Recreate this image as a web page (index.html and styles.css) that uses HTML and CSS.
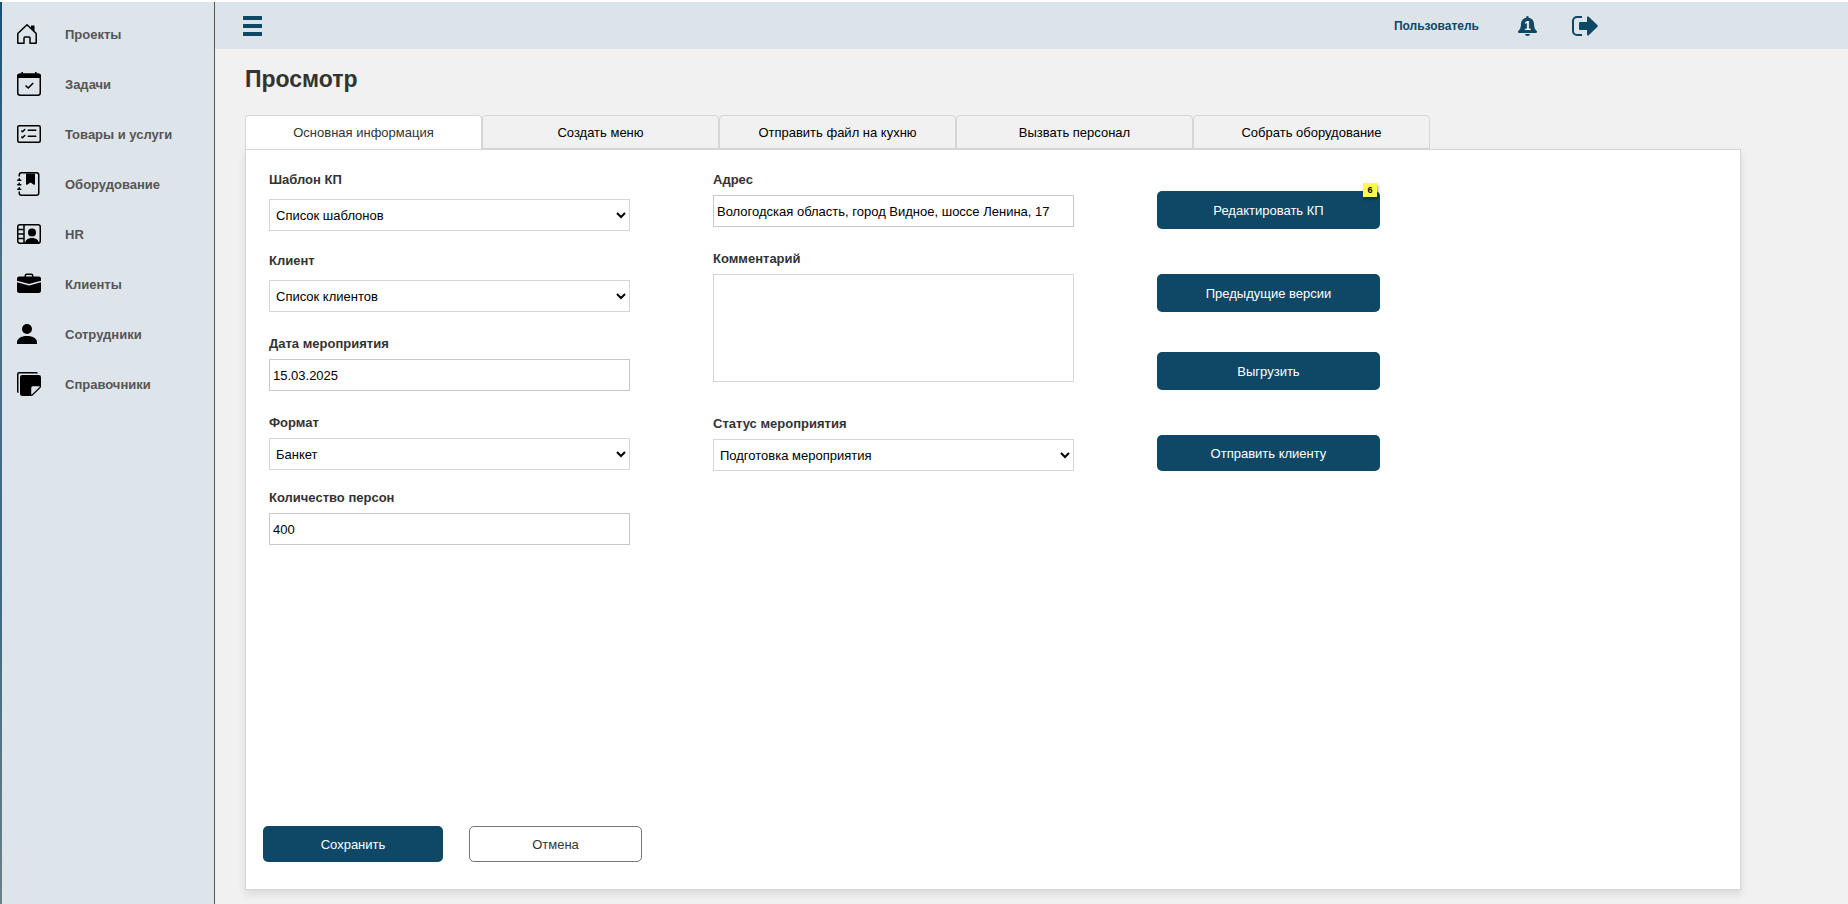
FILE: index.html
```html
<!DOCTYPE html>
<html lang="ru">
<head>
    <meta charset="UTF-8">
    <meta name="viewport" content="width=device-width, initial-scale=1.0">
    <title>Просмотр</title>
    <link rel="stylesheet" href="styles.css">
</head>
<body>
    <nav class="sidebar">
        <a class="menu-item" href="#">
            <span class="menu-icon"><svg width="20" height="20" viewBox="0 0 20 20" fill="none" stroke="#000" stroke-width="1.500"><path d="M.8 19.200V9.500L10 .8l9.200 8.700v9.700H13V14a1 1 0 0 0-1-1H8a1 1 0 0 0-1 1v5.200z" stroke-linejoin="round"/><path d="M14 1.500h3.500v6.500L14 4.500z" fill="#000" stroke="none"/></svg></span>
            <span>Проекты</span>
        </a>
        <a class="menu-item" href="#">
            <span class="menu-icon"><svg width="24" height="24" viewBox="0 0 24 24" fill="none" stroke="#000"><rect x="0.750" y="2.250" width="22.500" height="21" rx="2.500" stroke-width="1.500"/><path d="M0 6V4a2.500 2.500 0 0 1 2.500-2.500h19A2.500 2.500 0 0 1 24 4v2z" fill="#000" stroke="none"/><path d="M5.200 0v3M18.800 0v3M8.500 13.500l2.700 2.500 5-5" stroke-width="1.600"/></svg></span>
            <span>Задачи</span>
        </a>
        <a class="menu-item" href="#">
            <span class="menu-icon"><svg width="24" height="24" viewBox="0 0 16 16"><path d="M14.500 3a.5.5 0 0 1 .5.500v9a.5.5 0 0 1-.5.500h-13a.5.5 0 0 1-.5-.500v-9a.5.5 0 0 1 .5-.500zm-13-1A1.500 1.500 0 0 0 0 3.500v9A1.500 1.500 0 0 0 1.500 14h13a1.500 1.500 0 0 0 1.500-1.500v-9A1.500 1.500 0 0 0 14.500 2z"/><path d="M7 5.500a.5.5 0 0 1 .5-.500h5a.5.5 0 0 1 0 1h-5a.5.5 0 0 1-.5-.500m-1.496-.854a.5.5 0 0 1 0 .708l-1.500 1.500a.5.5 0 0 1-.708 0l-.5-.500a.5.5 0 1 1 .708-.708l.146.147 1.146-1.147a.5.5 0 0 1 .708 0M7 9.500a.5.5 0 0 1 .5-.500h5a.5.5 0 0 1 0 1h-5a.5.5 0 0 1-.5-.500m-1.496-.854a.5.5 0 0 1 0 .708l-1.500 1.500a.5.5 0 0 1-.708 0l-.5-.500a.5.5 0 0 1 .708-.708l.146.147 1.146-1.147a.5.5 0 0 1 .708 0"/></svg></span>
            <span>Товары и услуги</span>
        </a>
        <a class="menu-item" href="#">
            <span class="menu-icon"><svg width="24" height="24" viewBox="0 0 16 16"><path fill-rule="evenodd" d="M6 1h6v7a.5.5 0 0 1-.757.429L9 7.083 6.757 8.430A.5.5 0 0 1 6 8z"/><path d="M3 0h10a2 2 0 0 1 2 2v12a2 2 0 0 1-2 2H3a2 2 0 0 1-2-2v-1h1v1a1 1 0 0 0 1 1h10a1 1 0 0 0 1-1V2a1 1 0 0 0-1-1H3a1 1 0 0 0-1 1v1H1V2a2 2 0 0 1 2-2"/><path d="M1 5v-.5a.5.5 0 0 1 1 0V5h.5a.5.5 0 0 1 0 1h-2a.5.5 0 0 1 0-1zm0 3v-.5a.5.5 0 0 1 1 0V8h.5a.5.5 0 0 1 0 1h-2a.5.5 0 0 1 0-1zm0 3v-.5a.5.5 0 0 1 1 0v.5h.5a.5.5 0 0 1 0 1h-2a.5.5 0 0 1 0-1z"/></svg></span>
            <span>Оборудование</span>
        </a>
        <a class="menu-item" href="#">
            <span class="menu-icon"><svg width="24" height="20" viewBox="0 0 24 20" fill="none" stroke="#000" stroke-width="1.500"><rect x="0.750" y="0.750" width="22.500" height="18.500" rx="2.200"/><path d="M7 1v18M1 5.500h6M1 10h6M1 14.500h6"/><circle cx="15" cy="8.500" r="4" fill="#000" stroke="none"/><path d="M8 20c0-4 3-6 7-6s7 2 7 6z" fill="#000" stroke="none"/></svg></span>
            <span>HR</span>
        </a>
        <a class="menu-item" href="#">
            <span class="menu-icon"><svg width="24" height="24" viewBox="0 0 16 16"><path d="M6.500 1A1.500 1.500 0 0 0 5 2.500V3H1.500A1.500 1.500 0 0 0 0 4.500v1.384l7.614 2.030a1.500 1.500 0 0 0 .772 0L16 5.884V4.500A1.500 1.500 0 0 0 14.500 3H11v-.5A1.500 1.500 0 0 0 9.500 1zm0 1h3a.5.5 0 0 1 .5.500V3H6v-.5a.5.5 0 0 1 .5-.5"/><path d="M0 12.500A1.500 1.500 0 0 0 1.500 14h13a1.500 1.500 0 0 0 1.500-1.500V6.850L8.129 8.947a.5.5 0 0 1-.258 0L0 6.850z"/></svg></span>
            <span>Клиенты</span>
        </a>
        <a class="menu-item" href="#">
            <span class="menu-icon"><svg width="20" height="20" viewBox="0 0 20 20"><circle cx="10" cy="5" r="5"/><path d="M0 20v-1.500C0 14.500 4 12 10 12s10 2.500 10 6.500V20z"/></svg></span>
            <span>Сотрудники</span>
        </a>
        <a class="menu-item" href="#">
            <span class="menu-icon"><svg width="24" height="24" viewBox="0 0 16 16"><path d="M0 1.500V13a1 1 0 0 0 1 1V1.500a.5.5 0 0 1 .5-.5H14a1 1 0 0 0-1-1H1.500A1.500 1.500 0 0 0 0 1.500"/><path d="M3.500 2A1.500 1.500 0 0 0 2 3.500v11A1.500 1.500 0 0 0 3.500 16h6.086a1.500 1.500 0 0 0 1.060-.44l4.915-4.914A1.500 1.500 0 0 0 16 9.586V3.500A1.500 1.500 0 0 0 14.500 2zm6 8.500a1 1 0 0 1 1-1h4.396a.25.25 0 0 1 .177.427l-5.146 5.146a.25.25 0 0 1-.427-.177z"/></svg></span>
            <span>Справочники</span>
        </a>
    </nav>

    <div class="page">
        <header class="topbar">
            <button class="icon-btn" type="button" aria-label="Меню">
                <svg width="19" height="20" viewBox="0 0 19 20" fill="#0e4866"><rect width="19" height="4" rx="0.500"/><rect y="8" width="19" height="4" rx="0.500"/><rect y="16" width="19" height="4" rx="0.500"/></svg>
            </button>
            <div class="user">
                <a class="user-name" href="#">Пользователь</a>
                <button class="icon-btn bell" type="button" aria-label="Уведомления">
                    <svg width="19" height="20" viewBox="0 0 19 20" fill="#0e4866"><path d="M8.300 1.200a1.200 1.200 0 0 1 2.400 0v.5c3.300.6 5.300 3 5.300 6 0 4 1 5.500 2.700 7.300.7.900.3 2-.8 2H1.100c-1.100 0-1.500-1.100-.8-2C2 13.200 3 11.700 3 7.700c0-3 2-5.400 5.300-6zM7 18h5a2.500 2 0 0 1-5 0z"/></svg>
                    <span class="bell-count">1</span>
                </button>
                <button class="icon-btn" type="button" aria-label="Выход">
                    <svg width="26" height="20" viewBox="0 0 26 20" fill="#0e4866"><path d="M10 1H5a4 4 0 0 0-4 4v10a4 4 0 0 0 4 4h5" fill="none" stroke="#0e4866" stroke-width="2"/><path d="M7 7a1 1 0 0 1 1-1h7V1.500c0-1 1-1.400 1.700-.7l8.800 8.500a1 1 0 0 1 0 1.400l-8.800 8.500c-.7.700-1.700.3-1.700-.7V14H8a1 1 0 0 1-1-1z"/></svg>
                </button>
            </div>
        </header>

        <main class="content">
            <h1>Просмотр</h1>

            <div class="tabs">
                <button class="tab active" type="button">Основная информация</button>
                <button class="tab" type="button">Создать меню</button>
                <button class="tab" type="button">Отправить файл на кухню</button>
                <button class="tab" type="button">Вызвать персонал</button>
                <button class="tab" type="button">Собрать оборудование</button>
            </div>

            <form class="panel">
                <div class="columns">
                    <div class="column">
                        <div class="field field-spaced">
                            <label for="template">Шаблон КП</label>
                            <select id="template"><option>Список шаблонов</option></select>
                        </div>
                        <div class="field field-spaced">
                            <label for="client">Клиент</label>
                            <select id="client"><option>Список клиентов</option></select>
                        </div>
                        <div class="field">
                            <label for="date">Дата мероприятия</label>
                            <input type="text" id="date" value="15.03.2025">
                        </div>
                        <div class="field field-tight">
                            <label for="format">Формат</label>
                            <select id="format"><option>Банкет</option></select>
                        </div>
                        <div class="field">
                            <label for="persons">Количество персон</label>
                            <input type="text" id="persons" value="400">
                        </div>
                    </div>

                    <div class="column">
                        <div class="field">
                            <label for="address">Адрес</label>
                            <input type="text" id="address" value="Вологодская область, город Видное, шоссе Ленина, 17">
                        </div>
                        <div class="field field-comment">
                            <label for="comment">Комментарий</label>
                            <textarea id="comment"></textarea>
                        </div>
                        <div class="field">
                            <label for="status">Статус мероприятия</label>
                            <select id="status"><option>Подготовка мероприятия</option></select>
                        </div>
                    </div>

                    <div class="actions">
                        <div class="action-group">
                            <button class="btn btn-tall" type="button">Редактировать КП<span class="badge">6</span></button>
                            <button class="btn btn-tall" type="button">Предыдущие версии</button>
                        </div>
                        <div class="action-group">
                            <button class="btn btn-tall" type="button">Выгрузить</button>
                            <button class="btn" type="button">Отправить клиенту</button>
                        </div>
                    </div>
                </div>

                <div class="form-footer">
                    <button class="btn btn-save" type="submit">Сохранить</button>
                    <button class="btn btn-cancel" type="button">Отмена</button>
                </div>
            </form>
        </main>
    </div>
</body>
</html>
```

FILE: styles.css
```css
* {
    box-sizing: border-box;
}
body {
    display: flex;
    min-height: 100vh;
    margin: 0;
    border-top: 2px solid #fff;
    background-color: #f1f1f1;
    font-family: "Liberation Sans", Arial, sans-serif;
    font-size: 13px;
    color: #333;
}
button, input, select, textarea {
    font-family: inherit;
    font-size: 13px;
}
button {
    cursor: pointer;
}

/* Sidebar */
.sidebar {
    flex: 0 0 215px;
    padding: 7px 0 0 2px;
    border-right: 1px solid #555;
    background: linear-gradient(#1a5070, #4f6f85 30%, #3f6880 65%, #6b7f86) left / 2px 100% no-repeat #dde4ea;
}
.menu-item {
    display: flex;
    align-items: center;
    height: 50px;
    padding-left: 15px;
    color: #555;
    font-weight: bold;
    text-decoration: none;
}
.menu-icon {
    display: flex;
    width: 48px;
}

/* Top bar */
.page {
    flex: 1;
    display: flex;
    flex-direction: column;
    min-width: 0;
}
.topbar {
    display: flex;
    align-items: center;
    justify-content: space-between;
    height: 47px;
    padding: 0 250px 0 28px;
    background-color: #dce3e9;
}
.icon-btn {
    display: flex;
    padding: 0;
    border: none;
    background: none;
}
.user {
    display: flex;
    align-items: center;
}
.user-name {
    margin-right: 39px;
    color: #0e4866;
    font-size: 12px;
    font-weight: bold;
    text-decoration: none;
}
.bell {
    position: relative;
    margin-right: 35px;
}
.bell-count {
    position: absolute;
    top: 3px;
    left: 0;
    width: 100%;
    color: #fff;
    font-size: 12px;
    font-weight: bold;
    line-height: 14px;
    text-align: center;
}

/* Content */
.content {
    flex: 1;
    display: flex;
    flex-direction: column;
    padding: 16px 107px 14px 30px;
}
h1 {
    margin: 0 0 22px;
    font-size: 23px;
    line-height: 28px;
}
.tabs {
    display: flex;
}
.tab {
    width: 237px;
    height: 34px;
    border: 1px solid #d6d6d6;
    border-radius: 4px 4px 0 0;
    background-color: #f1f1f1;
    color: #000;
}
.tab.active {
    border-bottom: none;
    background-color: #fff;
    color: #333;
}
.panel {
    flex: 1;
    display: flex;
    flex-direction: column;
    justify-content: space-between;
    padding: 22px 17px 27px;
    border: 1px solid #d6d6d6;
    background-color: #fff;
    box-shadow: 0 4px 8px rgba(0, 0, 0, 0.1);
}
.columns {
    display: grid;
    grid-template-columns: 361px 361px 223px;
    column-gap: 83px;
    padding-left: 6px;
}
.field {
    display: flex;
    flex-direction: column;
    gap: 7px;
    margin-bottom: 24px;
}
.field-spaced {
    gap: 11px;
}
.field-spaced:first-child {
    margin-bottom: 22px;
}
.field-tight {
    margin-bottom: 20px;
}
.field-comment {
    margin-bottom: 34px;
}
.field label {
    font-weight: bold;
    line-height: 16px;
}
.field input,
.field select,
.field textarea {
    width: 100%;
    height: 32px;
    border: 1px solid #d6d6d6;
    border-radius: 0;
    background-color: #fff;
    color: #000;
}
.field input {
    padding: 0 3px;
    border-color: #c8c8c8;
}
.field select {
    padding: 0 2px;
}
.field textarea {
    height: 108px;
    resize: none;
}

/* Buttons */
.actions {
    display: flex;
    flex-direction: column;
    gap: 40px;
    padding-top: 19px;
}
.action-group {
    display: flex;
    flex-direction: column;
    gap: 45px;
}
.btn {
    position: relative;
    height: 36px;
    border: none;
    border-radius: 5px;
    background-color: #0e4866;
    color: #fff;
}
.btn-tall {
    height: 38px;
}
.badge {
    position: absolute;
    top: -8px;
    right: 3px;
    width: 14px;
    background-color: #fffa50;
    box-shadow: 1px 2px 3px rgba(0, 0, 0, 0.4);
    color: #000;
    font-size: 9px;
    font-weight: bold;
    line-height: 14px;
}
.form-footer {
    display: flex;
    gap: 26px;
}
.btn-save {
    width: 180px;
}
.btn-cancel {
    width: 173px;
    border: 1px solid #777;
    background-color: #fff;
    color: #333;
}
```
